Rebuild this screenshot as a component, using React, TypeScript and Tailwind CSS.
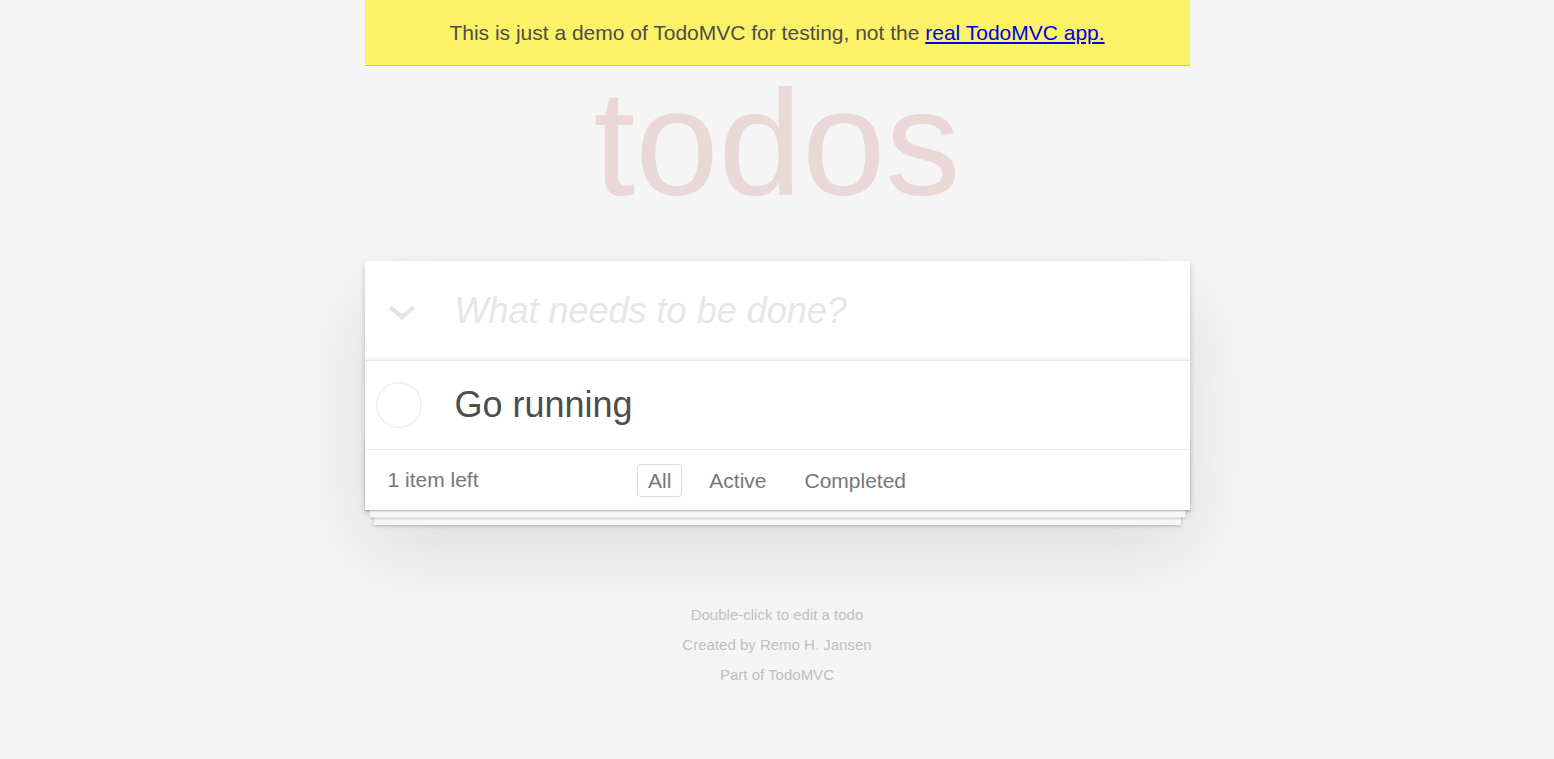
const FILTERS = [
  { label: "All", selected: true },
  { label: "Active", selected: false },
  { label: "Completed", selected: false },
];

const INFO = ["Double-click to edit a todo", "Created by Remo H. Jansen", "Part of TodoMVC"];

function ToggleAll() {
  return (
    <svg width="28" height="16" viewBox="0 0 28 16" className="shrink-0">
      <polyline
        points="2,3 14,13 26,3"
        fill="none"
        stroke="#e6e6e6"
        strokeWidth="4.5"
        strokeLinejoin="miter"
      />
    </svg>
  );
}

function Checkbox() {
  return (
    <svg width="46" height="46" viewBox="0 0 46 46" className="shrink-0">
      <circle cx="23" cy="23" r="22.25" fill="none" stroke="#ededed" strokeWidth="1.5" />
    </svg>
  );
}

export default function App() {
  return (
    <div className="min-h-screen bg-[#f5f5f5] font-['Liberation_Sans',Arial,sans-serif] text-[#4d4d4d]">
      <div className="mx-auto w-[825px]">
        <div className="flex h-[66px] items-center justify-center border-b border-[#d0cc30] bg-[#fcf266] pt-[1px] text-[21px]">
          <p>
            This is just a demo of TodoMVC for testing, not the{" "}
            <a className="text-[#0000ee] underline cursor-pointer">real TodoMVC app.</a>
          </p>
        </div>

        <h1 className="mt-[2px] mb-[43px] h-[150px] text-center text-[150px] leading-[150px] font-thin text-[rgba(175,47,47,0.15)]">
          todos
        </h1>

        <section className="bg-white shadow-[0_3px_6px_0_rgba(0,0,0,0.2),0_37.5px_75px_0_rgba(0,0,0,0.1)]">
          <header className="flex h-[99px] items-center shadow-[inset_0_-3px_1.5px_rgba(0,0,0,0.03)]">
            <div className="flex w-[90px] pl-[23px] pt-[2px]">
              <ToggleAll />
            </div>
            <input
              className="h-full flex-1 bg-transparent pr-6 text-[36px] outline-none placeholder:italic placeholder:text-[#e6e6e6]"
              placeholder="What needs to be done?"
            />
          </header>

          <ul className="border-t border-[#e6e6e6]">
            <li className="flex h-[89px] items-center border-b border-[#ededed]">
              <div className="flex w-[90px] pl-[11px]">
                <Checkbox />
              </div>
              <span className="text-[36px]">Go running</span>
            </li>
          </ul>

          <footer className="relative flex h-[60px] items-center px-[23px] text-[21px] text-[#777]">
            <div className="pointer-events-none absolute inset-x-0 bottom-0 h-[75px] shadow-[0_1.5px_1.5px_rgba(0,0,0,0.2),0_12px_0_-4.5px_#f6f6f6,0_13.5px_1.5px_-4.5px_rgba(0,0,0,0.2),0_24px_0_-9px_#f6f6f6,0_25.5px_3px_-9px_rgba(0,0,0,0.2)]" />
            <span className="relative">1 item left</span>
            <ul className="absolute inset-x-0 top-0 flex h-full items-center justify-center gap-[16px]">
              {FILTERS.map((f) => (
                <li key={f.label}>
                  <a
                    className={
                      f.selected
                        ? "block cursor-pointer rounded-[4px] border border-[#efd5d5] px-[10px] py-[4px] leading-[23px]"
                        : "block cursor-pointer rounded-[4px] border border-transparent px-[10px] py-[4px] leading-[23px]"
                    }
                  >
                    {f.label}
                  </a>
                </li>
              ))}
            </ul>
          </footer>
        </section>

        <div className="mt-[90px] text-center text-[15px] leading-[30px] text-[#bfbfbf]">
          {INFO.map((line) => (
            <p key={line}>{line}</p>
          ))}
        </div>
      </div>
    </div>
  );
}
